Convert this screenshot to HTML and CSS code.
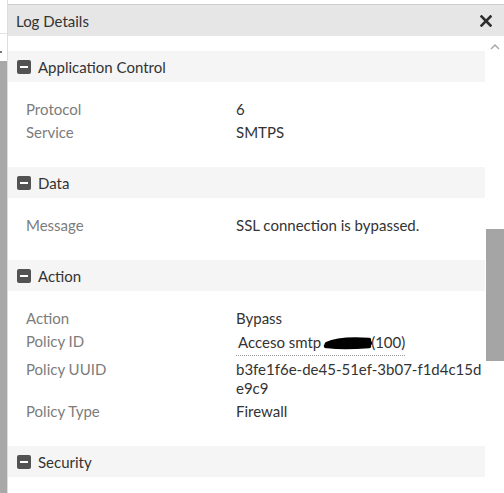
FILE: index.html
```html
<!DOCTYPE html>
<html>
<head>
<meta charset="utf-8">
<link rel="stylesheet" href="styles.css">
</head>
<body>
<div class="page">
  <div class="side">
    <div class="side-top"><div class="side-line"></div><div class="side-dot"></div></div>
    <div class="side-bottom"></div>
  </div>
  <div class="panel">
    <div class="header">
      <span class="title">Log Details</span>
      <svg class="close" width="12" height="12" viewBox="0 0 12 12"><path d="M1.5 1.5 L10.5 10.5 M10.5 1.5 L1.5 10.5" stroke="#2e2e2e" stroke-width="2.6" stroke-linecap="square"/></svg>
    </div>
    <div class="body">
      <div class="content">
        <div class="section-head"><span class="sq"><span class="bar"></span></span><span>Application Control</span></div>
        <div class="rows">
          <div class="row"><span class="label">Protocol</span><span class="value">6</span></div>
          <div class="row"><span class="label">Service</span><span class="value">SMTPS</span></div>
        </div>
        <div class="section-head"><span class="sq"><span class="bar"></span></span><span>Data</span></div>
        <div class="rows">
          <div class="row"><span class="label">Message</span><span class="value">SSL connection is bypassed.</span></div>
        </div>
        <div class="section-head"><span class="sq"><span class="bar"></span></span><span>Action</span></div>
        <div class="rows">
          <div class="row"><span class="label">Action</span><span class="value">Bypass</span></div>
          <div class="row"><span class="label">Policy ID</span><span class="value"><span class="link">Acceso smtp <svg class="redact" width="50" height="14" viewBox="0 0 50 14"><path d="M4 8 C 12 4, 30 3, 46 4 M3 10 C 15 8, 35 7, 47 7 M5 10 C 18 12, 34 11, 46 10" stroke="#000" stroke-width="4.5" fill="none" stroke-linecap="round"/></svg>(100)</span></span></div>
          <div class="row"><span class="label">Policy UUID</span><span class="value uuid">b3fe1f6e-de45-51ef-3b07-f1d4c15de9c9</span></div>
          <div class="row"><span class="label">Policy Type</span><span class="value">Firewall</span></div>
        </div>
        <div class="section-head"><span class="sq"><span class="bar"></span></span><span>Security</span></div>
      </div>
      <div class="scroll">
        <svg class="chev" width="10" height="7" viewBox="0 0 10 7"><path d="M1 6 L5 2 L9 6" stroke="#a8a8a8" stroke-width="1.5" fill="none"/></svg>
        <div class="thumb"></div>
      </div>
    </div>
  </div>
</div>
</body>
</html>
```
FILE: styles.css
```css
html, body {
  margin: 0;
  padding: 0;
  background: #fff;
}
body {
  font-family: Lato, "Open Sans", sans-serif;
  color: #333;
}
.page {
  display: flex;
  width: 504px;
  height: 493px;
  overflow: hidden;
}
.side {
  width: 7px;
  display: flex;
  flex-direction: column;
  border-right: 1px solid #dcdcdc;
}
.side-top {
  height: 61px;
  display: flex;
  flex-direction: column;
}
.side-line {
  height: 33px;
  border-bottom: 1px solid #e4e4e4;
}
.side-dot {
  width: 2px;
  height: 2px;
  background: #777;
  margin-top: 17px;
}
.side-bottom {
  flex: 1;
  background: #a8a8a8;
}
.panel {
  flex: 1;
  display: flex;
  flex-direction: column;
  margin-top: 4px;
  border-top: 1px solid #cdcdcd;
}
.header {
  height: 31px;
  background: #e6e6e6;
  display: flex;
  align-items: center;
  justify-content: space-between;
  padding: 0 12px 0 8px;
  flex-shrink: 0;
}
.title {
  font-size: 15px;
  color: #333;
}
.close {
  display: block;
}
.body {
  flex: 1;
  display: flex;
}
.content {
  width: 477px;
  padding-top: 15px;
}
.section-head {
  height: 31px;
  background: #f5f5f5;
  display: flex;
  align-items: center;
  padding-left: 9px;
  gap: 7px;
  font-size: 15px;
  color: #333;
}
.sq {
  width: 14px;
  height: 14px;
  background: #525252;
  border-radius: 2px;
  display: flex;
  align-items: center;
  justify-content: center;
}
.bar {
  width: 8px;
  height: 2px;
  background: #fff;
}
.rows {
  padding: 16px 0 23px 18px;
}
.row {
  display: flex;
  padding: 2px 0;
  font-size: 15px;
  line-height: 19px;
}
.label {
  width: 210px;
  flex-shrink: 0;
  color: #7c7c7c;
}
.value {
  width: 246px;
  color: #333;
}
.uuid {
  word-break: break-all;
}
.link {
  display: inline-block;
  padding: 1px 0 3px 2px;
  border-bottom: 1px dotted #9a9a9a;
}
.redact {
  vertical-align: -2px;
  margin-left: -2px;
  margin-right: -2px;
}
.scroll {
  width: 19px;
  display: flex;
  flex-direction: column;
  align-items: flex-end;
}
.chev {
  display: block;
  margin: 7px 4px 0 0;
}
.thumb {
  width: 18px;
  height: 132px;
  margin-top: 179px;
  background: #a5a5a5;
}
```
